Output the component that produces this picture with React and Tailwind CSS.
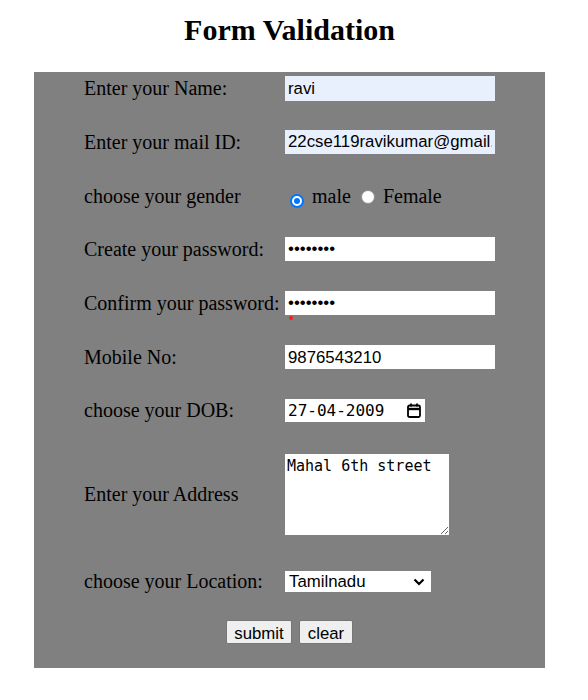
import { useState } from 'react'

const LABEL = 'w-[201px] shrink-0 text-[20px] leading-[23px] text-black'
const INPUT = 'w-[210px] h-[24px] px-[3px] text-[16.8px] text-black outline-none border-0'
const SANS = { fontFamily: '"Liberation Sans", Arial, sans-serif' }
const MONO = { fontFamily: '"DejaVu Sans Mono", "Liberation Mono", monospace' }

function Row({ label, mt, children }) {
  return (
    <div className={`flex items-center ${mt}`}>
      <span className={LABEL}>{label}</span>
      {children}
    </div>
  )
}

function Radio({ checked, onClick }) {
  return (
    <span
      onClick={onClick}
      className={`inline-flex items-center justify-center w-[14px] h-[14px] ml-[5px] mr-[3px] rounded-full align-[-1px] ${
        checked ? 'bg-white border-[2px] border-[#0075ff]' : 'bg-white border border-[#8f8f8f]'
      }`}
    >
      {checked && <span className="w-[6px] h-[6px] rounded-full bg-[#0075ff]" />}
    </span>
  )
}

export default function App() {
  const [gender, setGender] = useState('male')

  return (
    <div className="min-h-[700px] bg-white" style={{ fontFamily: '"Liberation Serif", serif' }}>
      <h1 className="w-[579px] h-[72px] pt-[13px] text-center text-[30px] leading-[33px] font-bold text-black">
        Form Validation
      </h1>

      <form
        className="ml-[34px] w-[511px] bg-[#808080] pt-[4px] pb-[24px] pl-[50px]"
        onSubmit={(e) => e.preventDefault()}
      >
        <Row label="Enter your Name:" mt="">
          <input className={`${INPUT} h-[25px] bg-[#e8f0fe]`} style={SANS} defaultValue="ravi" />
        </Row>

        <Row label="Enter your mail ID:" mt="mt-[29px]">
          <input className={`${INPUT} bg-[#e8f0fe]`} style={SANS} defaultValue="22cse119ravikumar@gmail.com" />
        </Row>

        <Row label="choose your gender" mt="mt-[30px]">
          <div className="text-[20px] leading-[24px] text-black">
            <Radio checked={gender === 'male'} onClick={() => setGender('male')} /> male{' '}
            <Radio checked={gender === 'female'} onClick={() => setGender('female')} /> Female
          </div>
        </Row>

        <Row label="Create your password:" mt="mt-[29px]">
          <input type="password" className={`${INPUT} bg-white`} style={SANS} defaultValue="ravi1234" />
        </Row>

        <Row label="Confirm your password:" mt="mt-[30px]">
          <div className="relative">
            <input type="password" className={`${INPUT} bg-white`} style={SANS} defaultValue="ravi1234" />
            {/* error marker */}
            <span className="absolute left-[4px] top-[25px] w-[4px] h-[4px] rounded-full bg-[#ff1a1a]" />
          </div>
        </Row>

        <Row label="Mobile No:" mt="mt-[30px]">
          <input className={`${INPUT} bg-white`} style={SANS} defaultValue="9876543210" />
        </Row>

        <Row label="choose your DOB:" mt="mt-[30px]">
          <div className="w-[140px] h-[23px] bg-white flex items-center pl-[3px] pr-[4px]">
            <span className="flex-1 text-[16px] text-black leading-[23px]" style={MONO}>
              27-04-2009
            </span>
            <svg width="14" height="15" viewBox="0 0 14 15" fill="none" stroke="#000" strokeWidth="1.8">
              <rect x="1" y="2.5" width="12" height="11.5" rx="1.5" />
              <path d="M1 6h12" strokeWidth="2.4" />
              <path d="M4 0.5v3M10 0.5v3" />
            </svg>
          </div>
        </Row>

        <Row label="Enter your Address" mt="mt-[32px]">
          <textarea
            className="w-[164px] h-[81px] bg-white px-[2px] pt-[3px] text-[15px] leading-[18px] text-black outline-none"
            style={MONO}
            defaultValue="Mahal 6th street"
          />
        </Row>

        <Row label="choose your Location:" mt="mt-[35px]">
          <div className="w-[146px] h-[21px] bg-white flex items-center pl-[4px] pr-[6px] text-[16.8px] text-black" style={SANS}>
            <span className="flex-1 leading-[21px]">Tamilnadu</span>
            <svg width="12" height="8" viewBox="0 0 12 8" fill="none" stroke="#000" strokeWidth="2.2">
              <path d="M1.5 1.5l4.5 4.5 4.5-4.5" />
            </svg>
          </div>
        </Row>

        <div className="mt-[27px] -ml-[50px] flex justify-center gap-[7px] text-[16.8px] text-black" style={SANS}>
          <button type="submit" className="w-[66px] h-[24px] bg-[#efefef] border border-[#767676] rounded-[2px]">
            submit
          </button>
          <button type="reset" className="w-[54px] h-[24px] bg-[#efefef] border border-[#767676] rounded-[2px]">
            clear
          </button>
        </div>
      </form>
    </div>
  )
}
